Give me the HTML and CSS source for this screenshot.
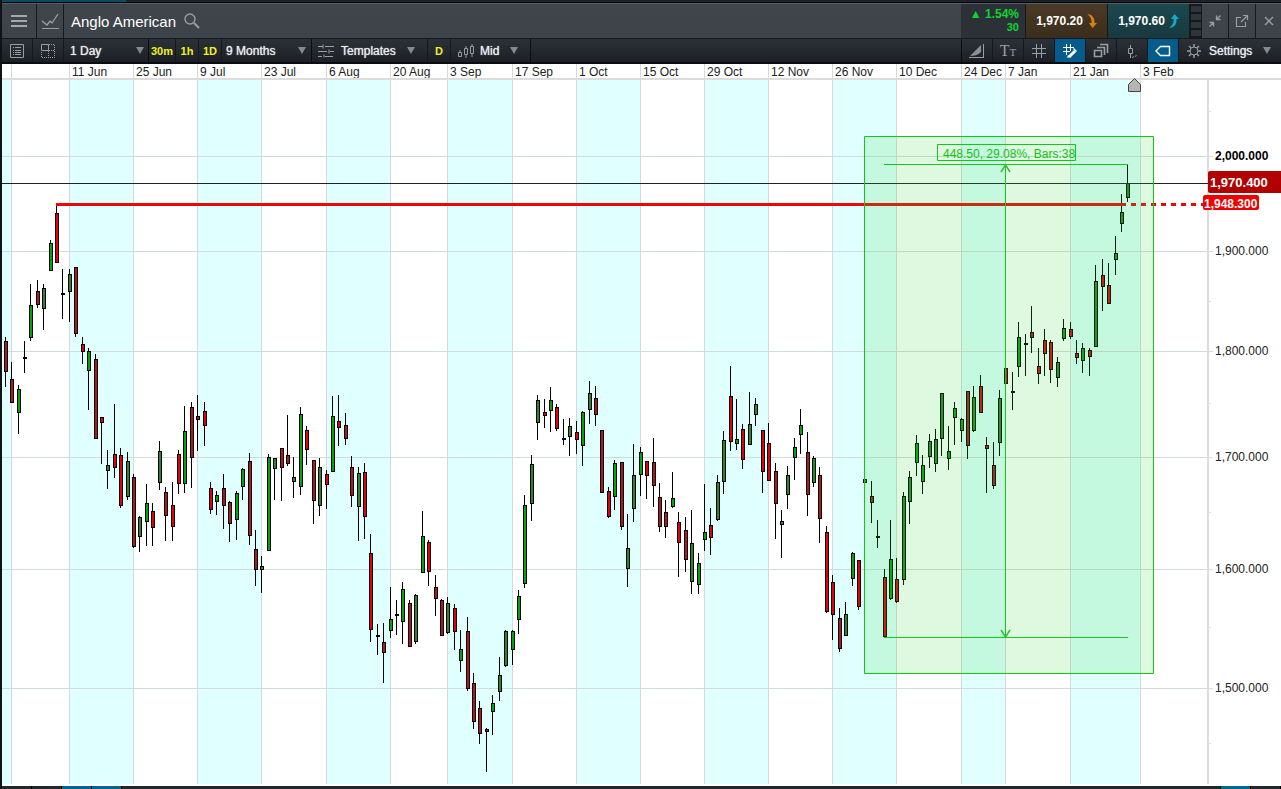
FILE: index.html
```
<!DOCTYPE html>
<html lang="en">
<head>
  <meta charset="UTF-8">
  <title>Anglo American</title>
  <link rel="stylesheet" href="styles.css">
</head>
<body>

<div class="strip strip-top"><i class="active"></i></div>

<header class="titlebar">
  <button class="cell menu" aria-label="Menu">
    <svg width="18" height="14" viewBox="0 0 18 14"><path d="M1 2h16M1 7h16M1 12h16" stroke-width="2"/></svg>
  </button>
  <button class="cell chart-type" aria-label="Chart">
    <svg width="18" height="18" viewBox="0 0 18 18"><path d="M1 9l5 4 3-4 2 2 6-9" stroke-width="1.3"/><path d="M1 16.500h17"/></svg>
  </button>
  <h1>Anglo American</h1>
  <button class="search" aria-label="Search">
    <svg width="16" height="16" viewBox="0 0 16 16"><circle cx="6" cy="6" r="5" stroke-width="1.4"/><path d="M10 10l5 5" stroke-width="2"/></svg>
  </button>
  <div class="change"><span>▲ 1.54%</span><span>30</span></div>
  <button class="price sell">1,970.20
    <svg width="11" height="16" viewBox="0 0 11 16"><path d="M1 1c5 0 8 4 7.500 9H11l-4.500 5L3 10h2.500C6 6 4 3 1 1z"/></svg>
  </button>
  <button class="price buy">1,970.60
    <svg width="11" height="16" viewBox="0 0 11 16"><path d="M1 15c5 0 8-4 7.500-9H11L6.500 1 3 6h2.500C6 10 4 13 1 15z"/></svg>
  </button>
  <div class="depth"><i></i><i></i><i></i><i></i></div>
  <button class="cell win" aria-label="Shrink">
    <svg width="14" height="14" viewBox="0 0 14 14"><path d="M8.500 1.500v4h4M8.500 5.500l4-4M1.500 8.500h4v4M5.500 8.500l-4 4" stroke-width="1.300"/></svg>
  </button>
  <button class="cell win" aria-label="Pop out">
    <svg width="14" height="14" viewBox="0 0 14 14"><path d="M6 3.500H1.500v9h9V8M8 1.500h4.500V6M12.500 1.500L6 8" stroke-width="1.200"/></svg>
  </button>
  <button class="cell win" aria-label="Close">
    <svg width="14" height="14" viewBox="0 0 14 14"><path d="M3 3l8 8M11 3l-8 8" stroke-width="1.4"/></svg>
  </button>
</header>

<nav class="toolbar">
  <button class="tool wide" aria-label="List">
    <svg width="16" height="16" viewBox="0 0 16 16"><path d="M1.500 1.500h13v13h-13zM4 4.500h1M6 4.500h6M4 7.500h1M6 7.500h6M4 9.500h1M6 9.500h6M4 11.500h1M6 11.500h6"/></svg>
  </button>
  <button class="tool wide" aria-label="Layout">
    <svg width="16" height="16" viewBox="0 0 16 16"><path d="M1.500 1.500h7v6h-7z"/><path d="M9 1.500h5.500V14.500h-13V8M8.500 8v6M9 7.500h5" stroke-dasharray="1 1"/></svg>
  </button>
  <label class="drop interval"><select aria-label="Interval"><option>1 Day</option></select><i class="arrow"></i></label>
  <button class="tool quick">30m</button>
  <button class="tool quick">1h</button>
  <button class="tool quick">1D</button>
  <label class="drop period"><select aria-label="Period"><option>9 Months</option></select><i class="arrow"></i></label>
  <button class="tool templates">
    <svg width="16" height="14" viewBox="0 0 16 14"><path d="M0 2.500h5M7 2.500h9M5 .5v4M0 7.500h9M12 7.500h4M11 5.500v4M0 12.500h4M7 12.500h8M6 10.500v3"/></svg>
    Templates <i class="arrow"></i>
  </button>
  <button class="tool quick">D</button>
  <label class="drop mid">
    <svg width="16" height="14" viewBox="0 0 16 14"><path d="M.5 8.500h3v4h-3zM6.500 4.500h3v6h-3zM12.500 2.500h3v7h-3zM2 6v2M8 2v2M8 11v3M14 0v2M14 10v3"/></svg>
    <select aria-label="Price type"><option>Mid</option></select><i class="arrow"></i>
  </label>
  <span class="space"></span>
  <button class="tool wide" aria-label="Fan">
    <svg width="16" height="14" viewBox="0 0 16 14"><path class="solid" d="M1 12L12 1v7c-3 3-7 4-11 4z"/><path d="M0 13.500h14M14.500 0v14"/></svg>
  </button>
  <button class="tool wide text-tool" aria-label="Text">T<small>T</small></button>
  <button class="tool wide" aria-label="Grid">
    <svg width="16" height="16" viewBox="0 0 16 16"><path d="M5.500 1v14M10.500 1v14M1 5.500h14M1 10.500h14"/></svg>
  </button>
  <button class="tool wide on" aria-label="Draw on grid">
    <svg width="16" height="16" viewBox="0 0 16 16"><path d="M4.500 1v11M8.500 1v7M1 4.500h11M1 8.500h7"/><path d="M7 14l6-6" stroke-width="3"/><path class="solid" d="M12 5l3 3-1 1-3-3zM5 15l1-3 2 2z"/></svg>
  </button>
  <button class="tool wide" aria-label="Layers">
    <svg width="16" height="16" viewBox="0 0 16 16"><path d="M1.500 7.500h7v6h-7zM4 4.500h7.500V12M7 1.500h7.500V10" stroke-width="1.600"/></svg>
  </button>
  <button class="tool wide" aria-label="Candle">
    <svg width="16" height="16" viewBox="0 0 16 16"><path d="M4.500 5.500h4v5h-4zM6.500 2v3M6.500 11v4"/><path d="M8 14.500l5-2" stroke-dasharray="2 1"/></svg>
  </button>
  <button class="tool wide on" aria-label="Price label">
    <svg width="16" height="12" viewBox="0 0 16 12"><path d="M5.500 1.500h9v9h-9L1 6z" stroke-width="1.400"/></svg>
  </button>
  <button class="tool settings">
    <svg width="16" height="16" viewBox="0 0 16 16"><circle cx="8" cy="8" r="4"/><path d="M8 1v3M8 12v3M1 8h3M12 8h3M3 3l2 2M11 11l2 2M13 3l-2 2M5 11l-2 2" stroke-width="1.500"/></svg>
    Settings <i class="arrow"></i>
  </button>
</nav>

<svg class="chart" id="chart" viewBox="2 64 1279 722">
  <g id="bands"></g>
  <g id="grid"></g>
  <g id="candles"></g>
  <g class="lines">
    <rect class="last" x="2" y="183" width="1206" height="1"/>
    <rect class="level" x="56" y="203" width="1070" height="3"/>
    <path class="level-dash" d="M1131 204.500h74"/>
  </g>
  <g class="measure">
    <rect class="zone" x="864" y="136" width="290" height="538"/>
    <path d="M864.500 136.500h289v537h-289z"/>
    <path d="M884 164.500h244M884 637.500h244M1005.500 165v472"/>
    <path class="head" d="M1001 172l4.500-7 4.500 7M1001 630l4.500 7 4.500-7"/>
    <path d="M937.500 144.500h138v16h-138z"/>
    <text x="943" y="158">448.50, 29.08%, Bars:38</text>
  </g>
  <path class="marker" d="M1128.500 91.500v-7l6-6 6 6v7z"/>
  <g class="tags">
    <rect class="tag-last" x="1208" y="171" width="75" height="22" rx="2"/>
    <text class="big" x="1210" y="187">1,970.400</text>
    <rect class="tag-level" x="1203" y="195" width="56" height="15" rx="2"/>
    <text x="1204" y="208">1,948.300</text>
  </g>
</svg>

<div class="strip strip-bottom"><i></i><i></i><i class="active"></i><i class="active"></i><i class="fill"></i><i class="active"></i><i></i></div>

<script src="chart.js"></script>
</body>
</html>
```

FILE: chart.js
```
const NS = "http://www.w3.org/2000/svg";
const colors = { g: "#00a50a", G: "#26882a", r: "#e3000c", R: "#b4151d", k: "#000" };

const dates = [
  [69, "11 Jun"], [133, "25 Jun"], [197, "9 Jul"], [261, "23 Jul"], [326, "6 Aug"],
  [390, "20 Aug"], [447, "3 Sep"], [512, "17 Sep"], [576, "1 Oct"], [640, "15 Oct"],
  [704, "29 Oct"], [768, "12 Nov"], [832, "26 Nov"], [896, "10 Dec"], [961, "24 Dec"],
  [1005, "7 Jan"], [1070, "21 Jan"], [1140, "3 Feb"]
];
const prices = [
  [156, "2,000.000"], [251, "1,900.000"], [351, "1,800.000"],
  [457, "1,700.000"], [569, "1,600.000"], [688, "1,500.000"]
];

// x, high, body top, body bottom, low, colour
const candles = [
  [5,337,341,372,387,"R"],[11,362,379,403,403,"R"],[18,385,389,413,434,"g"],[24,341,357,359,373,"k"],
  [30,284,305,338,341,"g"],[37,280,291,305,308,"R"],[43,284,288,309,330,"G"],[50,240,243,271,271,"g"],
  [56,206,213,263,263,"r"],[62,269,293,295,319,"k"],[69,269,274,292,322,"G"],[75,267,267,334,337,"R"],
  [82,337,344,352,364,"r"],[88,348,351,371,410,"g"],[95,354,359,439,439,"R"],[101,417,417,423,464,"r"],
  [107,450,465,471,489,"G"],[114,404,454,468,478,"r"],[120,448,455,506,508,"r"],[127,452,461,497,500,"G"],
  [133,474,477,547,548,"R"],[139,516,517,537,552,"G"],[146,484,503,522,546,"g"],[152,503,511,528,546,"r"],
  [159,441,451,483,490,"G"],[165,487,492,516,541,"R"],[172,482,505,527,541,"r"],[178,450,454,484,494,"r"],
  [184,406,431,484,493,"g"],[191,402,407,458,488,"R"],[197,395,416,420,451,"R"],[204,402,411,426,446,"r"],
  [210,482,488,510,514,"r"],[216,491,495,502,515,"g"],[223,474,488,506,529,"R"],[229,501,502,524,542,"R"],
  [236,491,493,520,540,"g"],[242,468,469,487,500,"g"],[249,453,461,536,545,"R"],[255,530,549,570,586,"R"],
  [261,556,566,570,593,"G"],[268,454,457,551,551,"g"],[274,458,458,469,500,"G"],[281,448,448,468,501,"R"],
  [287,415,455,464,466,"R"],[293,457,477,482,498,"G"],[300,407,414,487,495,"g"],[306,426,430,450,465,"r"],
  [313,460,460,501,524,"R"],[319,458,467,506,516,"G"],[326,470,474,485,509,"r"],[332,396,416,472,472,"g"],
  [338,395,421,428,446,"r"],[345,413,425,439,445,"R"],[351,456,467,496,507,"R"],[358,467,473,507,541,"G"],
  [364,463,472,517,539,"r"],[370,534,553,630,642,"r"],[377,624,635,637,655,"k"],[383,623,642,653,683,"R"],
  [390,587,619,631,638,"g"],[396,600,614,616,635,"k"],[402,582,589,622,644,"g"],[409,600,603,647,647,"R"],
  [415,594,595,642,644,"G"],[422,511,536,573,573,"g"],[428,540,542,572,586,"r"],[435,575,587,599,616,"R"],
  [441,599,600,636,636,"R"],[447,597,603,633,634,"G"],[454,604,608,632,650,"r"],[460,630,649,661,672,"g"],
  [467,617,631,689,691,"R"],[473,673,683,722,729,"R"],[479,701,708,734,744,"R"],[486,728,729,732,772,"R"],
  [492,695,703,712,735,"g"],[499,657,675,692,701,"G"],[505,630,631,666,667,"G"],[512,630,631,650,665,"g"],
  [518,590,596,620,634,"g"],[524,495,505,584,588,"g"],[531,455,464,504,521,"G"],[537,395,400,423,440,"G"],
  [544,399,412,416,428,"r"],[550,387,400,411,432,"g"],[556,404,407,429,431,"r"],[563,419,438,440,445,"k"],
  [569,418,426,437,456,"G"],[576,421,432,440,454,"r"],[582,411,412,446,466,"g"],[589,381,393,410,424,"G"],
  [595,386,398,415,426,"R"],[601,430,430,493,493,"R"],[608,487,491,517,518,"r"],[614,460,463,497,510,"g"],
  [621,462,462,527,530,"R"],[627,514,548,569,587,"G"],[633,444,475,509,522,"G"],[640,447,452,475,496,"g"],
  [646,461,461,476,499,"r"],[653,438,462,486,507,"R"],[659,483,497,527,532,"R"],[665,500,512,527,538,"R"],
  [672,472,498,507,508,"g"],[678,512,522,543,577,"r"],[685,517,530,560,572,"R"],[691,510,543,582,594,"G"],
  [698,553,563,585,594,"g"],[704,484,532,540,551,"g"],[710,508,525,538,555,"r"],[717,475,482,520,521,"G"],
  [723,431,440,482,494,"G"],[730,366,396,442,451,"r"],[736,399,439,444,450,"g"],[742,424,429,460,469,"r"],
  [749,392,424,445,445,"G"],[755,398,404,415,426,"G"],[762,430,430,472,493,"r"],[768,423,443,481,481,"r"],
  [775,463,471,504,539,"R"],[781,510,521,525,558,"G"],[787,466,475,495,509,"G"],[794,438,447,458,480,"g"],
  [800,409,425,435,454,"g"],[807,432,452,495,516,"R"],[813,456,458,483,487,"g"],[819,467,475,519,543,"R"],
  [826,526,532,612,613,"r"],[832,575,582,615,640,"r"],[839,608,618,649,652,"R"],[845,602,614,636,636,"G"],
  [852,552,553,579,586,"g"],[858,560,560,607,610,"r"],[864,479,479,483,483,"G"],[871,481,496,503,523,"R"],
  [877,520,536,538,548,"k"],[884,569,577,637,637,"r"],[890,520,559,599,600,"g"],[896,558,579,602,603,"r"],
  [903,492,496,580,585,"G"],[909,471,477,502,524,"G"],[916,435,443,463,476,"g"],[922,455,465,482,494,"g"],
  [929,434,441,457,468,"G"],[935,429,439,464,472,"G"],[941,393,393,439,456,"G"],[948,426,451,459,470,"g"],
  [954,402,408,418,445,"g"],[961,418,419,431,442,"g"],[967,391,391,446,459,"R"],[973,386,397,431,432,"g"],
  [980,375,386,413,413,"r"],[986,437,445,449,493,"r"],[993,442,465,486,489,"R"],[999,390,398,443,456,"G"],
  [1005,368,368,384,384,"r"],[1012,372,391,393,410,"k"],[1018,322,337,367,377,"g"],[1025,334,343,345,376,"k"],
  [1031,306,332,338,353,"R"],[1038,348,366,374,384,"r"],[1044,329,340,354,376,"r"],[1050,340,342,370,383,"r"],
  [1057,357,362,378,387,"G"],[1063,319,328,339,341,"g"],[1070,322,329,337,339,"r"],[1076,340,353,358,364,"r"],
  [1082,343,348,361,373,"g"],[1089,348,350,357,376,"r"],[1095,265,281,347,347,"G"],[1102,259,275,287,311,"r"],
  [1108,263,285,304,304,"r"],[1115,236,253,260,275,"G"],[1121,194,212,224,232,"G"],[1127,164,183,198,202,"G"]
];

function rect(parent, x, y, width, height, fill) {
  const el = document.createElementNS(NS, "rect");
  const attrs = { x, y, width, height, fill };
  for (const key in attrs) el.setAttribute(key, attrs[key]);
  parent.appendChild(el);
}

function label(parent, x, y, text, bold) {
  const el = document.createElementNS(NS, "text");
  el.setAttribute("x", x);
  el.setAttribute("y", y);
  if (bold) el.setAttribute("class", "bold");
  el.textContent = text;
  parent.appendChild(el);
}

const bands = document.getElementById("bands");
const grid = document.getElementById("grid");
const bars = document.getElementById("candles");

// every other date column is shaded
rect(bands, 2, 80, 9, 704, "#e0ffff");
for (let i = 0; i < dates.length - 1; i += 2) {
  rect(bands, dates[i][0], 80, dates[i + 1][0] - dates[i][0], 704, "#e0ffff");
}

rect(grid, 11, 64, 1, 720, "#d3dadc");
dates.forEach(([x, text]) => {
  rect(grid, x, 64, 1, 720, "#d3dadc");
  label(grid, x + 3, 76, text);
});
prices.forEach(([y, text], i) => {
  rect(grid, 2, y, 1211, 1, "#d3dadc");
  label(grid, 1215, y + 4, text, i === 0);
});
[111, 301, 403, 512, 627, 743].forEach(y => rect(grid, 1208, y, 3, 1, "#ddd"));
rect(grid, 2, 78, 1279, 2, "#dcdcdc");
rect(grid, 1207, 80, 2, 704, "#dcdcdc");

candles.forEach(([x, high, top, bottom, low, color]) => {
  rect(bars, x, high, 1, low - high, "#000");
  rect(bars, x - 1, top, 4, bottom - top, "#000");
  if (color !== "k") rect(bars, x, top + 1, 2, bottom - top - 2, colors[color]);
});
```

FILE: styles.css
```
* { box-sizing: border-box; }
body {
  margin: 0;
  border-left: 2px solid #101316;
  background: #fff;
  font-family: "Liberation Sans", Arial, sans-serif;
  font-size: 12px;
  color: #e8ebed;
}
button, select {
  margin: 0;
  padding: 0;
  border: 0;
  background: none;
  color: inherit;
  font: inherit;
  text-shadow: inherit;
  cursor: pointer;
}
svg { display: block; flex: none; }
button svg, .drop svg {
  fill: none;
  stroke: #9a9ea3;
  stroke-width: 1;
}
.strip {
  display: flex;
  height: 3px;
  background: #24272c;
}
.strip-top { background: #1c2127; border-bottom: 1px solid #08090a; }
.strip-top i { width: 124px; background: #0c4a63; }
.strip-bottom i {
  width: 30px;
  border-right: 1px solid #000;
}
.strip-bottom .fill { flex: 1; }
.strip-bottom .active { background: #046590; }

.titlebar {
  display: flex;
  align-items: stretch;
  height: 35px;
  border-top: 1px solid #565b61;
  background: linear-gradient(#40454c, #3d434a);
}
.titlebar h1 {
  margin: 0 8px 0 7px;
  align-self: center;
  font-size: 15px;
  font-weight: normal;
  color: #fff;
}
.cell, .tool {
  display: flex;
  align-items: center;
  justify-content: center;
  border-right: 1px solid #15181c;
}
.menu { width: 35px; }
.menu svg { stroke: #a4a8ad; }
.chart-type { width: 27px; }
.search { margin-right: auto; }
.change {
  display: flex;
  flex-direction: column;
  justify-content: center;
  width: 65px;
  padding-right: 6px;
  border-right: 1px solid #15181c;
  background: #2c3138;
  font-weight: bold;
  line-height: 13px;
  text-align: right;
  color: #0ad72d;
}
.change span:last-child { font-size: 11px; }
.price {
  display: flex;
  align-items: center;
  justify-content: center;
  gap: 3px;
  width: 82px;
  border-right: 1px solid #15181c;
  font-weight: bold;
  color: #fff;
}
.price svg { stroke: none; }
.sell { background: linear-gradient(#4a3a26, #3b2d1d); }
.sell svg { fill: #d7820f; }
.buy { background: linear-gradient(#1d4850, #17393f); }
.buy svg { fill: #18a9c4; }
.depth {
  display: flex;
  flex-direction: column;
  justify-content: space-evenly;
  width: 12px;
  padding: 0 1px;
  background: #15181c;
}
.depth i { height: 6px; background: #30353c; }
.win { width: 27px; }
.win:last-child { width: 25px; border-right: 0; }

.toolbar {
  display: flex;
  height: 26px;
  border-top: 1px solid #17191d;
  border-bottom: 2px solid #0a0c0e;
  background: linear-gradient(#2c3138, #1c2026);
  text-shadow: 0 0 1px #e8ebed;
}
.wide { width: 31px; }
.quick {
  min-width: 23px;
  padding: 0 2px;
  font-size: 11px;
  font-weight: bold;
  color: #f4f01c;
  text-shadow: none;
}
.drop {
  display: flex;
  align-items: center;
  border-right: 1px solid #0b0d0f;
}
.drop select {
  flex: 1;
  min-width: 0;
  appearance: none;
}
.drop option { color: #000; }
.arrow {
  border: 4px solid transparent;
  border-top: 7px solid #85898e;
  border-bottom: 0;
}
.interval { width: 85px; padding: 0 4px 0 6px; }
.period { width: 90px; padding: 0 5px 0 4px; }
.templates {
  gap: 7px;
  width: 116px;
  padding-left: 6px;
  justify-content: flex-start;
}
.templates .arrow { margin-left: 4px; }
.mid { gap: 6px; width: 80px; padding: 0 12px 0 7px; }
.space { flex: 1; border-right: 1px solid #0b0d0f; }
.on { background: #045c8c; }
.toolbar .on svg { stroke: #fff; }
.toolbar .solid { fill: #8b9096; stroke: none; }
.toolbar .on .solid { fill: #fff; }
.text-tool {
  align-items: baseline;
  padding-top: 3px;
  font-family: "Liberation Serif", serif;
  font-size: 16px;
  color: #9a9ea3;
  text-shadow: none;
}
.text-tool small { font-size: 11px; }
.settings {
  gap: 7px;
  width: 102px;
  padding-left: 7px;
  justify-content: flex-start;
  border-right: 0;
}
.settings .arrow { margin-left: 4px; }

.chart {
  width: 100%;
  height: auto;
  font-size: 12px;
}
#bands, #grid, #candles, .lines { shape-rendering: crispEdges; }
#grid text { fill: #222; }
#grid .bold { fill: #000; font-weight: bold; }
.last { fill: #222; }
.level { fill: #e60a0a; }
.level-dash { stroke: #e60a0a; stroke-width: 3; stroke-dasharray: 5 5; }
.measure path { fill: none; stroke: #14c81a; }
.measure .head { stroke: #30c238; stroke-width: 1.5; }
.measure text { fill: #14c01a; }
.zone { fill: rgba(50, 215, 55, .16); }
.marker { fill: #b5b5b5; stroke: #444; }
.tags text { fill: #fff; font-weight: bold; }
.tags .big { font-size: 13px; }
.tag-last { fill: #b00000; }
.tag-level { fill: #f00000; }
```
